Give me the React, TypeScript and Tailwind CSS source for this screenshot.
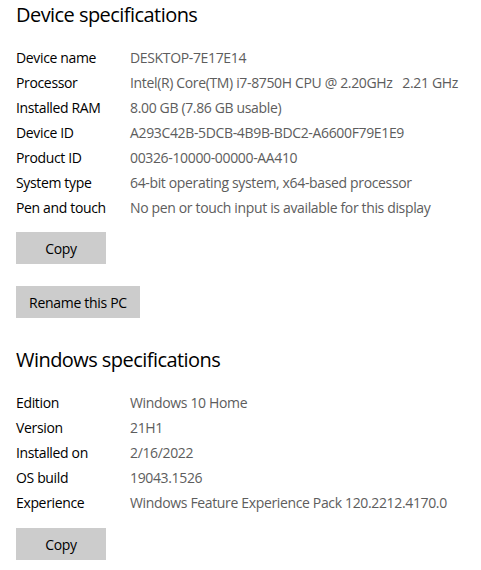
import React from "react";

const device: [string, string][] = [
  ["Device name", "DESKTOP-7E17E14"],
  ["Processor", "Intel(R) Core(TM) i7-8750H CPU @ 2.20GHz   2.21 GHz"],
  ["Installed RAM", "8.00 GB (7.86 GB usable)"],
  ["Device ID", "A293C42B-5DCB-4B9B-BDC2-A6600F79E1E9"],
  ["Product ID", "00326-10000-00000-AA410"],
  ["System type", "64-bit operating system, x64-based processor"],
  ["Pen and touch", "No pen or touch input is available for this display"],
];

const windows: [string, string][] = [
  ["Edition", "Windows 10 Home"],
  ["Version", "21H1"],
  ["Installed on", "2/16/2022"],
  ["OS build", "19043.1526"],
  ["Experience", "Windows Feature Experience Pack 120.2212.4170.0"],
];

function Rows({ rows }: { rows: [string, string][] }) {
  return (
    <div className="flex flex-col">
      {rows.map(([k, v]) => (
        <div key={k} className="flex h-[25px] items-center text-[14px] tracking-[-0.35px]">
          <div className="w-[114px] shrink-0 text-black">{k}</div>
          <div className="whitespace-pre text-[#5d5d5d]">{v}</div>
        </div>
      ))}
    </div>
  );
}

function Btn({ children, w }: { children: React.ReactNode; w: string }) {
  return (
    <button className={`${w} h-[32px] bg-[#cccccc] text-[14px] tracking-[-0.3px] text-black`}>{children}</button>
  );
}

export default function App() {
  return (
    <div
      className="w-[481px] h-[570px] bg-white pl-[16px] overflow-hidden"
      style={{ fontFamily: '"Open Sans", "Noto Sans", sans-serif' }}
    >
      <h1 className="h-[30px] leading-[30px] text-[20px] tracking-[-0.55px] text-black">Device specifications</h1>
      <div className="mt-[15px]">
        <Rows rows={device} />
      </div>
      <div className="mt-[12px]">
        <Btn w="w-[90px]">Copy</Btn>
      </div>
      <div className="mt-[22px]">
        <Btn w="w-[124px]">Rename this PC</Btn>
      </div>
      <h1 className="mt-[27px] h-[30px] leading-[30px] text-[20px] tracking-[-0.55px] text-black">Windows specifications</h1>
      <div className="mt-[15px]">
        <Rows rows={windows} />
      </div>
      <div className="mt-[13px]">
        <Btn w="w-[90px]">Copy</Btn>
      </div>
    </div>
  );
}
